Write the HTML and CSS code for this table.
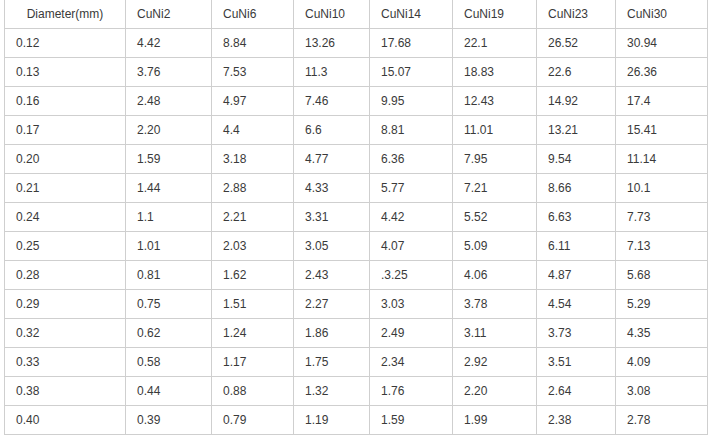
FILE: index.html
```html
<!DOCTYPE html>
<html lang="en">
<head>
<meta charset="utf-8">
<title>CuNi resistance table</title>
<link rel="stylesheet" href="styles.css">
</head>
<body>
<table class="data-table">
  <colgroup>
    <col class="c1"><col class="c2"><col class="c3"><col class="c4"><col class="c5"><col class="c6"><col class="c7"><col class="c8">
  </colgroup>
  <thead>
    <tr><th class="first">Diameter(mm)</th><th>CuNi2</th><th>CuNi6</th><th>CuNi10</th><th>CuNi14</th><th>CuNi19</th><th>CuNi23</th><th>CuNi30</th></tr>
  </thead>
  <tbody>
    <tr><td>0.12</td><td>4.42</td><td>8.84</td><td>13.26</td><td>17.68</td><td>22.1</td><td>26.52</td><td>30.94</td></tr>
    <tr><td>0.13</td><td>3.76</td><td>7.53</td><td>11.3</td><td>15.07</td><td>18.83</td><td>22.6</td><td>26.36</td></tr>
    <tr><td>0.16</td><td>2.48</td><td>4.97</td><td>7.46</td><td>9.95</td><td>12.43</td><td>14.92</td><td>17.4</td></tr>
    <tr><td>0.17</td><td>2.20</td><td>4.4</td><td>6.6</td><td>8.81</td><td>11.01</td><td>13.21</td><td>15.41</td></tr>
    <tr><td>0.20</td><td>1.59</td><td>3.18</td><td>4.77</td><td>6.36</td><td>7.95</td><td>9.54</td><td>11.14</td></tr>
    <tr><td>0.21</td><td>1.44</td><td>2.88</td><td>4.33</td><td>5.77</td><td>7.21</td><td>8.66</td><td>10.1</td></tr>
    <tr><td>0.24</td><td>1.1</td><td>2.21</td><td>3.31</td><td>4.42</td><td>5.52</td><td>6.63</td><td>7.73</td></tr>
    <tr><td>0.25</td><td>1.01</td><td>2.03</td><td>3.05</td><td>4.07</td><td>5.09</td><td>6.11</td><td>7.13</td></tr>
    <tr><td>0.28</td><td>0.81</td><td>1.62</td><td>2.43</td><td>.3.25</td><td>4.06</td><td>4.87</td><td>5.68</td></tr>
    <tr><td>0.29</td><td>0.75</td><td>1.51</td><td>2.27</td><td>3.03</td><td>3.78</td><td>4.54</td><td>5.29</td></tr>
    <tr><td>0.32</td><td>0.62</td><td>1.24</td><td>1.86</td><td>2.49</td><td>3.11</td><td>3.73</td><td>4.35</td></tr>
    <tr><td>0.33</td><td>0.58</td><td>1.17</td><td>1.75</td><td>2.34</td><td>2.92</td><td>3.51</td><td>4.09</td></tr>
    <tr><td>0.38</td><td>0.44</td><td>0.88</td><td>1.32</td><td>1.76</td><td>2.20</td><td>2.64</td><td>3.08</td></tr>
    <tr><td>0.40</td><td>0.39</td><td>0.79</td><td>1.19</td><td>1.59</td><td>1.99</td><td>2.38</td><td>2.78</td></tr>
  </tbody>
</table>
</body>
</html>
```
FILE: styles.css
```css
html, body {
  margin: 0;
  padding: 0;
  background: #fff;
}
body {
  padding-left: 4px;
  font-family: "Liberation Sans", Arial, sans-serif;
  font-size: 12px;
  color: #3a3a3a;
}
.data-table {
  border-collapse: collapse;
  table-layout: fixed;
  width: 703px;
}
.c1 { width: 121px; }
.c2 { width: 86px; }
.c3 { width: 82px; }
.c4 { width: 76px; }
.c5 { width: 83px; }
.c6 { width: 84px; }
.c7 { width: 79px; }
.c8 { width: 92px; }
.data-table th,
.data-table td {
  border: 1px solid #cfcfcf;
  height: 28px;
  padding: 0 0 0 11px;
  text-align: left;
  font-weight: normal;
  vertical-align: middle;
  white-space: nowrap;
}
.data-table thead th {
  border-top: none;
}
.data-table th.first {
  text-align: center;
  padding-left: 0;
}
```
